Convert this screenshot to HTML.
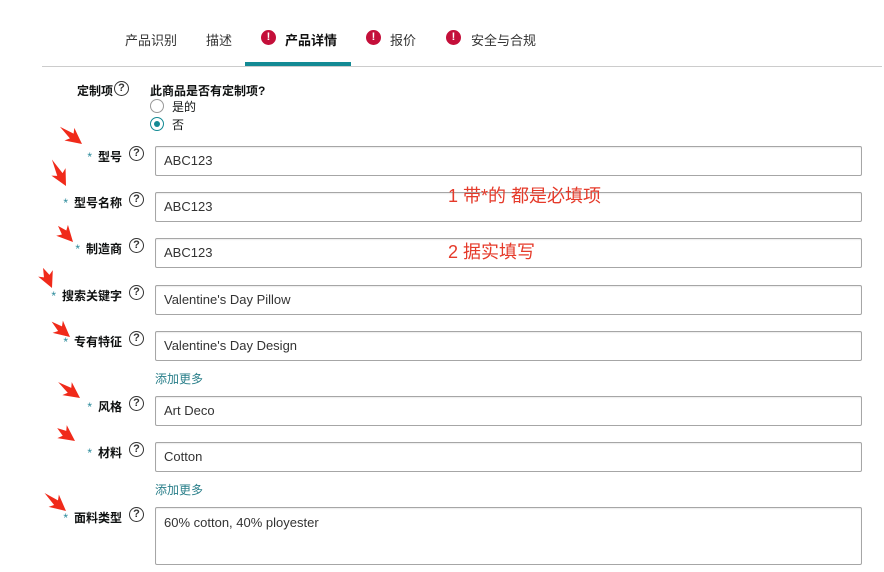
<!DOCTYPE html>
<html><head><meta charset="utf-8"><style>
body{margin:0;width:884px;height:572px;background:#fff;font-family:"Liberation Sans","Noto Sans CJK SC",sans-serif;position:relative;overflow:hidden;color:#0f1111}
.a{position:absolute}
.tab{position:absolute;top:30px;font-size:13px;color:#333}
.ex{position:absolute;top:30px;width:15px;height:15px;border-radius:50%;background:#c40f3a;color:#fff;font-size:11px;font-weight:bold;text-align:center;line-height:15px}
.lbl{position:absolute;right:762px;font-size:12px;font-weight:bold;white-space:nowrap;margin-top:1px}
.lbl i{font-style:normal;color:#2a8a9a;font-weight:normal;margin-right:6px}
.q{position:absolute;left:129px;width:13px;height:13px;border:1.5px solid #333;border-radius:50%;font-size:11px;font-weight:bold;text-align:center;line-height:13px;color:#333;margin-top:0px}
.in{position:absolute;left:155px;width:707px;height:30px;border:1px solid #a6a6a6;border-radius:2px;font-size:13px;font-weight:normal;color:#333;line-height:28px;padding-left:8px;box-sizing:border-box;box-shadow:inset 0 1px 1px rgba(0,0,0,.08)}
.more{position:absolute;left:155px;font-size:12px;color:#2a7f8a}
.red{position:absolute;left:448px;font-size:18px;color:#e53a2a}
</style></head><body>
<div class="tab" style="left:125px">产品识别</div>
<div class="tab" style="left:206px">描述</div>
<div class="ex" style="left:261px">!</div><div class="tab" style="left:285px;font-weight:bold;color:#111">产品详情</div>
<div class="ex" style="left:366px">!</div><div class="tab" style="left:390px">报价</div>
<div class="ex" style="left:446px">!</div><div class="tab" style="left:471px">安全与合规</div>
<div class="a" style="left:42px;top:66px;width:840px;height:1px;background:#ccc"></div>
<div class="a" style="left:245px;top:62px;width:106px;height:4px;background:#138a94"></div>

<div class="a" style="left:77px;top:82px;font-size:12px;font-weight:bold">定制项</div>
<div class="q" style="left:114px;top:81px">?</div>
<div class="a" style="left:150px;top:82px;font-size:12px;font-weight:bold">此商品是否有定制项?</div>
<div class="a" style="left:150px;top:99px;width:12px;height:12px;border:1px solid #999;border-radius:50%"></div>
<div class="a" style="left:172px;top:98px;font-size:12px">是的</div>
<div class="a" style="left:150px;top:117px;width:12px;height:12px;border:1px solid #138a94;border-radius:50%"></div>
<div class="a" style="left:154px;top:121px;width:6px;height:6px;background:#138a94;border-radius:50%"></div>
<div class="a" style="left:172px;top:116px;font-size:12px">否</div>

<div class="lbl" style="top:147px"><i>*</i>型号</div><div class="q" style="top:146px">?</div>
<div class="in" style="top:146px">ABC123</div>
<div class="lbl" style="top:193px"><i>*</i>型号名称</div><div class="q" style="top:192px">?</div>
<div class="in" style="top:192px">ABC123</div>
<div class="lbl" style="top:239px"><i>*</i>制造商</div><div class="q" style="top:238px">?</div>
<div class="in" style="top:238px">ABC123</div>
<div class="lbl" style="top:286px"><i>*</i>搜索关键字</div><div class="q" style="top:285px">?</div>
<div class="in" style="top:285px">Valentine's Day Pillow</div>
<div class="lbl" style="top:332px"><i>*</i>专有特征</div><div class="q" style="top:331px">?</div>
<div class="in" style="top:331px">Valentine's Day Design</div>
<div class="more" style="top:370px">添加更多</div>
<div class="lbl" style="top:397px"><i>*</i>风格</div><div class="q" style="top:396px">?</div>
<div class="in" style="top:396px">Art Deco</div>
<div class="lbl" style="top:443px"><i>*</i>材料</div><div class="q" style="top:442px">?</div>
<div class="in" style="top:442px">Cotton</div>
<div class="more" style="top:481px">添加更多</div>
<div class="lbl" style="top:508px"><i>*</i>面料类型</div><div class="q" style="top:507px">?</div>
<div class="in" style="top:507px;height:58px;line-height:30px">60% cotton, 40% ployester</div>

<div class="red" style="top:182px">1 带*的 都是必填项</div>
<div class="red" style="top:238px">2 据实填写</div>

<svg class="a" style="left:0;top:0" width="884" height="572">
<g fill="#f02a1a">
<g transform="translate(82,144) rotate(38)"><polygon points="-28,0 -13,-3 -16,-8 0,0 -16,8 -13,3"/></g>
<g transform="translate(66,186) rotate(62)"><polygon points="-30,0 -13,-3 -16,-8 0,0 -16,8 -13,3"/></g>
<g transform="translate(73,242) rotate(47)"><polygon points="-22,0 -13,-3 -16,-8 0,0 -16,8 -13,3"/></g>
<g transform="translate(52,288) rotate(66)"><polygon points="-22,0 -13,-3 -16,-8 0,0 -16,8 -13,3"/></g>
<g transform="translate(70,337) rotate(40)"><polygon points="-24,0 -13,-3 -16,-8 0,0 -16,8 -13,3"/></g>
<g transform="translate(80,398) rotate(36)"><polygon points="-27,0 -13,-3 -16,-8 0,0 -16,8 -13,3"/></g>
<g transform="translate(75,441) rotate(36)"><polygon points="-22,0 -13,-3 -16,-8 0,0 -16,8 -13,3"/></g>
<g transform="translate(66,511) rotate(40)"><polygon points="-28,0 -13,-3 -16,-8 0,0 -16,8 -13,3"/></g>
</g>
</svg>
</body></html>
